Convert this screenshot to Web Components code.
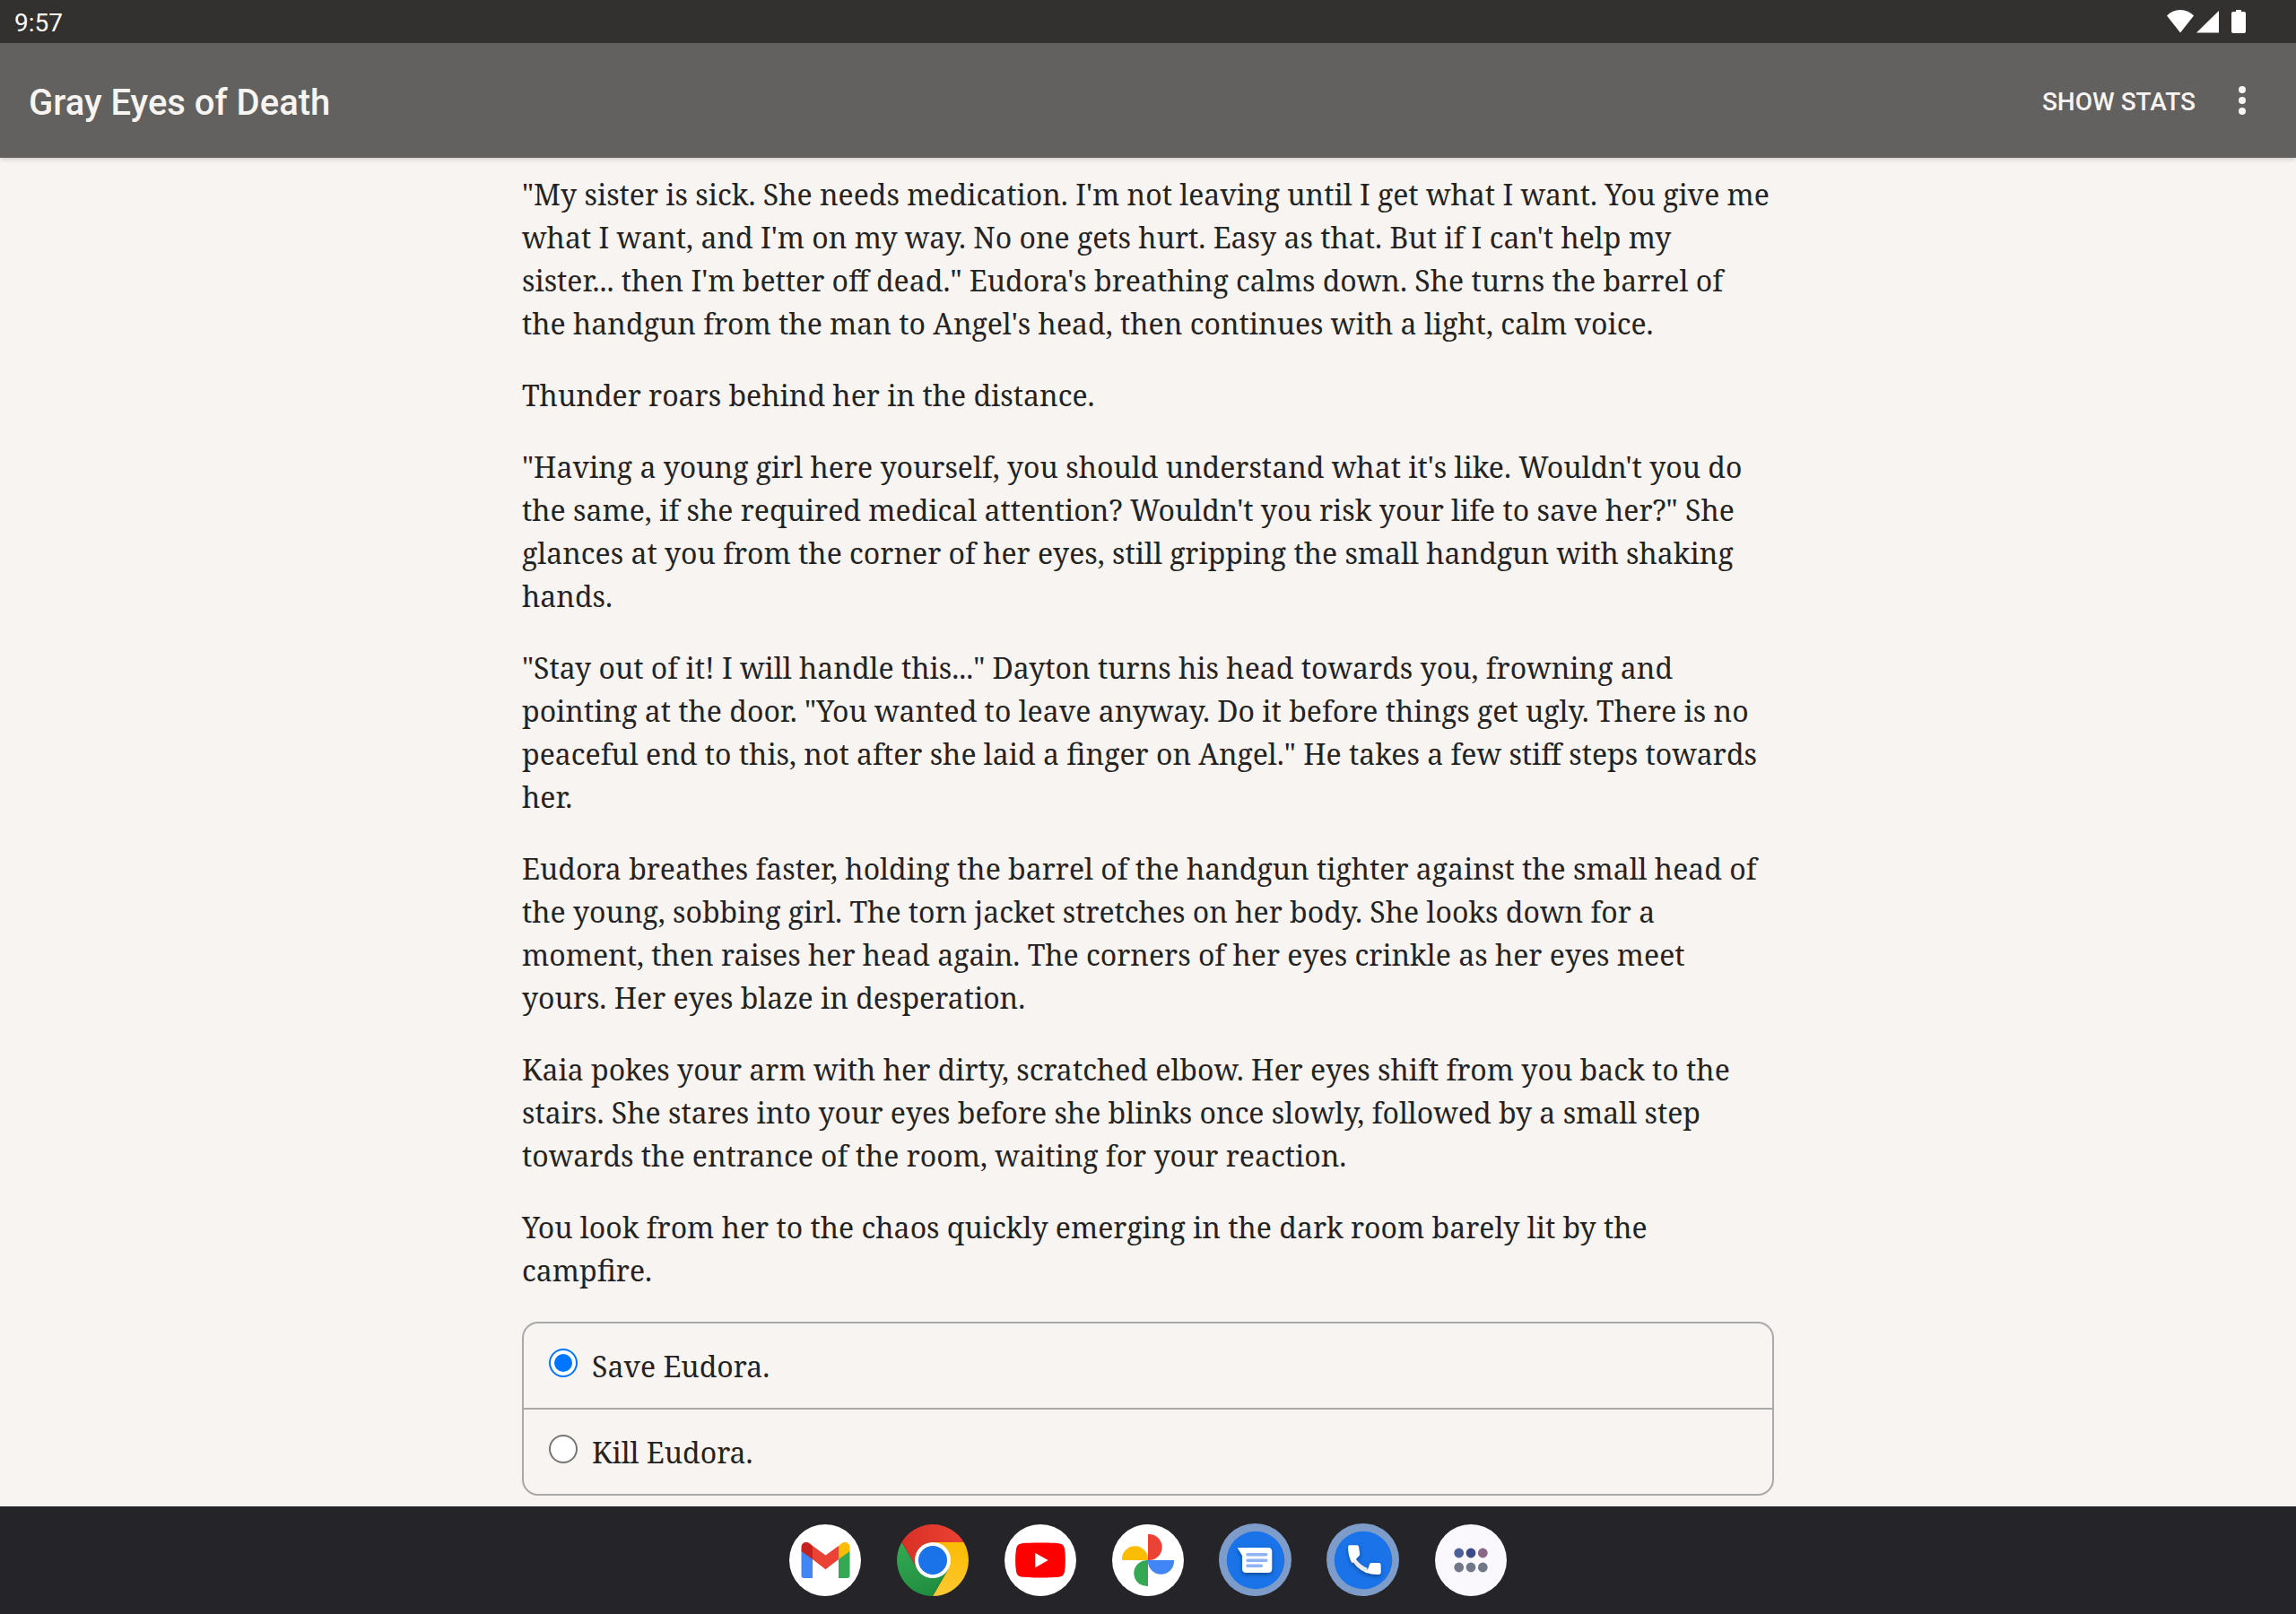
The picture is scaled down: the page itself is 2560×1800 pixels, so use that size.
<!DOCTYPE html>
<html lang="en">
<head>
<meta charset="utf-8">
<meta name="viewport" content="width=device-width, initial-scale=1">
<title>Gray Eyes of Death</title>
<style>
    html, body{
        margin:0;
        height:100%;
        background:#f7f4f1;
    }
    body{
        font-family:Roboto, "Noto Sans", sans-serif;
    }
</style>
</head>
<body>
<game-screen>
    <status-bar slot="top" time="9:57"></status-bar>
    <app-bar slot="top">Gray Eyes of Death</app-bar>

    <story-page>
        <p>"My sister is sick. She needs medication. I'm not leaving until I get what I want. You give me
        what I want, and I'm on my way. No one gets hurt. Easy as that. But if I can't help my<br>
        sister... then I'm better off dead." Eudora's breathing calms down. She turns the barrel of<br>
        the handgun from the man to Angel's head, then continues with a light, calm voice.</p>
        <p>Thunder roars behind her in the distance.</p>
        <p>"Having a young girl here yourself, you should understand what it's like. Wouldn't you do
        the same, if she required medical attention? Wouldn't you risk your life to save her?" She
        glances at you from the corner of her eyes, still gripping the small handgun with shaking
        hands.</p>
        <p>"Stay out of it! I will handle this..." Dayton turns his head towards you, frowning and
        pointing at the door. "You wanted to leave anyway. Do it before things get ugly. There is no
        peaceful end to this, not after she laid a finger on Angel." He takes a few stiff steps towards
        her.</p>
        <p>Eudora breathes faster, holding the barrel of the handgun tighter against the small head of
        the young, sobbing girl. The torn jacket stretches on her body. She looks down for a
        moment, then raises her head again. The corners of her eyes crinkle as her eyes meet
        yours. Her eyes blaze in desperation.</p>
        <p>Kaia pokes your arm with her dirty, scratched elbow. Her eyes shift from you back to the
        stairs. She stares into your eyes before she blinks once slowly, followed by a small step
        towards the entrance of the room, waiting for your reaction.</p>
        <p>You look from her to the chaos quickly emerging in the dark room barely lit by the
        campfire.</p>
        <story-choices selected="0">
            <span>Save Eudora.</span>
            <span>Kill Eudora.</span>
        </story-choices>
    </story-page>

    <app-dock slot="bottom"></app-dock>
</game-screen>

<script>
class GameScreen extends HTMLElement {
    constructor() {
        super();
        this.attachShadow({mode: 'open'});
        this.shadowRoot.innerHTML=`
            <style>
                :host{
                    display:grid;
                    grid-template-rows:auto minmax(0, 1fr) auto;
                    height:100vh;
                }
                header{
                    z-index:1;
                    box-shadow:0 1px 6px rgba(0, 0, 0, .2);
                }
                main{
                    overflow-y:auto;
                }
            </style>
            <header><slot name="top"></slot></header>
            <main><slot></slot></main>
            <slot name="bottom"></slot>
        `;
    }
}

class StatusBar extends HTMLElement {
    constructor() {
        super();
        this.attachShadow({mode: 'open'});
        this.shadowRoot.innerHTML=`
            <style>
                :host{
                    display:flex;
                    align-items:center;
                    justify-content:space-between;
                    height:48px;
                    padding:0 56px 0 16px;
                    color:#fff;
                    background:#32312f;
                }
                time{
                    padding-top:4px;
                    font-size:28px;
                    line-height:32px;
                }
                svg{
                    display:block;
                    fill:currentColor;
                }
            </style>
            <time>${this.getAttribute('time')||''}</time>
            <svg width="88" height="26" viewBox="0 0 88 26" role="img" aria-label="Wi-Fi, mobile signal and battery">
                <path d="M15 0C9 0 4 2.200 0 6.500L15 25.500L30 6.500C26 2.200 21 0 15 0z"/>
                <path d="M58 1V25.500H33z"/>
                <path d="M77 0h6v2h3q2 0 2 2v20q0 2-2 2H74q-2 0-2-2V4q0-2 2-2h3z"/>
            </svg>
        `;
    }
}

class AppBar extends HTMLElement {
    constructor() {
        super();
        this.attachShadow({mode: 'open'});
        this.shadowRoot.innerHTML=`
            <style>
                :host{
                    display:flex;
                    align-items:center;
                    height:128px;
                    padding:0 20px 0 32px;
                    color:#f7f4f1;
                    background:#62615f;
                }
                h1{
                    flex:1;
                    margin:0;
                    padding-top:6px;
                    font-size:40px;
                    font-weight:500;
                    line-height:48px;
                }
                button{
                    display:flex;
                    align-items:center;
                    justify-content:center;
                    height:96px;
                    padding:0 12px;
                    border:0;
                    color:inherit;
                    background:none;
                    font:500 28px/32px Roboto, "Noto Sans", sans-serif;
                    text-transform:uppercase;
                }
                .stats{
                    padding-top:4px;
                }
                .more{
                    width:80px;
                }
                svg{
                    fill:currentColor;
                }
            </style>
            <h1><slot></slot></h1>
            <button type="button" class="stats">Show Stats</button>
            <button type="button" class="more" aria-label="More options">
                <svg width="8" height="32" viewBox="0 0 8 32">
                    <circle cx="4" cy="4" r="4"/>
                    <circle cx="4" cy="16" r="4"/>
                    <circle cx="4" cy="28" r="4"/>
                </svg>
            </button>
        `;
    }
}

class StoryPage extends HTMLElement {
    constructor() {
        super();
        this.attachShadow({mode: 'open'});
        this.shadowRoot.innerHTML=`
            <style>
                :host{
                    display:block;
                    padding:17px 32px 8px;
                    color:#242321;
                    font-family:"Noto Serif", "Liberation Serif", serif;
                    font-size:32px;
                    line-height:48px;
                }
                article{
                    max-width:1396px;
                    margin:0 auto;
                }
                ::slotted(p){
                    margin:0 0 32px;
                }
            </style>
            <article><slot></slot></article>
        `;
    }
}

class StoryChoices extends HTMLElement {
    constructor() {
        super();
        this.attachShadow({mode: 'open'});
    }

    connectedCallback(){
        const selected=Number(this.getAttribute('selected'));
        const options=[...this.children];

        // every child goes to the label of its own radio
        options.forEach((option, i)=>{
            option.slot=`option-${i}`;
        });

        this.shadowRoot.innerHTML=`
            <style>
                :host{
                    display:block;
                    padding-top:1px;
                }
                fieldset{
                    margin:0;
                    padding:0;
                    border:2px solid #a9a9a9;
                    border-radius:18px;
                }
                label{
                    display:flex;
                    align-items:flex-start;
                    gap:16px;
                    padding:24px 28px 22px;
                }
                label + label{
                    border-top:2px solid #a9a9a9;
                }
                input{
                    display:grid;
                    place-items:center;
                    flex:none;
                    box-sizing:border-box;
                    width:32px;
                    height:32px;
                    margin:4px 0 0;
                    appearance:none;
                    border:2px solid #767676;
                    border-radius:50%;
                    background:#fff;
                }
                input:checked{
                    border-color:#0075ff;
                }
                input:checked::before{
                    content:"";
                    width:20px;
                    height:20px;
                    border-radius:50%;
                    background:#0075ff;
                }
            </style>
            <fieldset>
                ${options.map((option, i)=>`
                    <label>
                        <input type="radio" name="choice" ${i===selected?'checked':''}>
                        <slot name="option-${i}"></slot>
                    </label>
                `).join('')}
            </fieldset>
        `;
    }
}

const icons={
    Gmail:`
        <circle cx="40" cy="40" r="40" fill="#fff"/>
        <path fill="#4285f4" d="M13.500 29L26 38V60H16.500a3 3 0 0 1-3-3z"/>
        <path fill="#34a853" d="M67.500 29L55 38V60h9.500a3 3 0 0 0 3-3z"/>
        <path fill="#ea4335" d="M26 24L40.500 34.500L55 24V39L40.500 50.300L26 39z"/>
        <path fill="#c5221f" d="M13.500 30V25.500C13.500 20.500 19 18.500 23 21.600L26 24V39z"/>
        <path fill="#fbbc04" d="M67.500 30V25.500C67.500 20.500 62 18.500 58 21.600L55 24V39z"/>
    `,
    Chrome:`
        <defs>
            <linearGradient id="r"><stop offset="0" stop-color="#d93025"/><stop offset="1" stop-color="#ea4335"/></linearGradient>
            <linearGradient id="g" x1=".6" y1="1" x2=".2" y2="0"><stop offset="0" stop-color="#1e8e3e"/><stop offset="1" stop-color="#34a853"/></linearGradient>
            <linearGradient id="y" x1=".3" y1="1" x2=".6" y2="0"><stop offset="0" stop-color="#fcc934"/><stop offset="1" stop-color="#fbbc04"/></linearGradient>
        </defs>
        <path fill="url(#r)" d="M5.400 20A40 40 0 0 1 74.600 20H40V40L22.700 50z"/>
        <path fill="url(#y)" d="M74.600 20A40 40 0 0 1 40 80L57.300 50L40 40V20z"/>
        <path fill="url(#g)" d="M5.400 20A40 40 0 0 0 40 80L57.300 50L40 40L22.700 50z"/>
        <circle cx="40" cy="40" r="20" fill="#fff"/>
        <circle cx="40" cy="40" r="16" fill="#1a73e8"/>
    `,
    YouTube:`
        <circle cx="40" cy="40" r="40" fill="#fff"/>
        <path fill="#f00" d="M40 20.500C52 20.500 58 20.800 61.500 21.500C65 22.200 66.500 24 67 27.500C68.200 35 68.200 45 67 52.500C66.500 56 65 57.800 61.500 58.500C56 59.800 24 59.800 18.500 58.500C15 57.800 13.500 56 13 52.500C11.800 45 11.800 35 13 27.500C13.500 24 15 22.200 18.500 21.500C22 20.800 28 20.500 40 20.500z"/>
        <path fill="#fff" d="M34.300 32L48.700 40L34.300 48.200z"/>
    `,
    Photos:`
        <circle cx="40" cy="40" r="40" fill="#fff"/>
        <path fill="#ea4335" d="M40 11h1.200a14.500 14.500 0 0 1 0 29H40z"/>
        <path fill="#4285f4" d="M40 11h1.200a14.500 14.500 0 0 1 0 29H40z" transform="rotate(90 40 40)"/>
        <path fill="#34a853" d="M40 11h1.200a14.500 14.500 0 0 1 0 29H40z" transform="rotate(180 40 40)"/>
        <path fill="#fbbc04" d="M40 11h1.200a14.500 14.500 0 0 1 0 29H40z" transform="rotate(270 40 40)"/>
    `,
    Messages:`
        <circle cx="39.500" cy="39.500" r="40.500" fill="#7d9cc9"/>
        <circle cx="40" cy="40" r="32.300" fill="#1a73e8"/>
        <path class="raised" fill="#fff" d="M19.700 26H54Q58.300 26 58.300 30.500V49.500Q58.300 54 54 54H29.500Q25 54 25 49.500V35z"/>
        <path fill="none" stroke="#8fb2f5" stroke-width="3.500" stroke-linecap="round" d="M31 33.800H51.700M31 40.200H51.700M31 46.200H46.300"/>
    `,
    Phone:`
        <circle cx="39.500" cy="39.500" r="40.500" fill="#7d9cc9"/>
        <circle cx="40" cy="40" r="32.300" fill="#1a73e8"/>
        <g class="raised">
            <path fill="#e8eaed" d="M25 36L31.800 38.500Q36.500 45.500 44.500 48.800L44 54.600Q31 49 25 36z"/>
            <path fill="#fff" d="M25 23.200H33Q34.800 23.200 35 25L36.200 32.500Q36.400 34 35.500 35L31.800 39L27.500 43.500Q23 35 23 25.500Q23 23.200 25 23.200z"/>
            <path fill="#fff" d="M49 43H57.500Q59.500 43 59.600 45L59.800 53Q59.700 56 57 56Q50 56.300 42.500 53.800L45.500 49L47 44.500Q47.500 43 49 43z"/>
        </g>
    `,
    'All apps':`
        <circle cx="40" cy="40" r="40" fill="#faf8fd"/>
        <g fill="#707888">
            <circle cx="26.700" cy="32" r="5.400" fill="#4c6199"/>
            <circle cx="40" cy="32" r="5.400" fill="#3a4b89"/>
            <circle cx="53.300" cy="32" r="5.400" fill="#8a6789"/>
            <circle cx="26.700" cy="48" r="5.400"/>
            <circle cx="40" cy="48" r="5.400"/>
            <circle cx="53.300" cy="48" r="5.400"/>
        </g>
    `
};

class AppDock extends HTMLElement {
    constructor() {
        super();
        this.attachShadow({mode: 'open'});
        this.shadowRoot.innerHTML=`
            <style>
                :host{
                    display:block;
                    background:#252429;
                }
                nav{
                    display:flex;
                    align-items:center;
                    justify-content:center;
                    gap:40px;
                    height:120px;
                }
                button{
                    width:80px;
                    height:80px;
                    padding:0;
                    border:0;
                    border-radius:50%;
                    background:none;
                }
                svg{
                    display:block;
                    overflow:visible;
                }
                .raised{
                    filter:drop-shadow(0 2px 2px rgba(0, 0, 0, .35));
                }
            </style>
            <nav aria-label="Apps">
                ${Object.entries(icons).map(([name, shapes])=>`
                    <button type="button" aria-label="${name}">
                        <svg width="80" height="80" viewBox="0 0 80 80">${shapes}</svg>
                    </button>
                `).join('')}
            </nav>
        `;
    }
}

customElements.define('game-screen', GameScreen);
customElements.define('status-bar', StatusBar);
customElements.define('app-bar', AppBar);
customElements.define('story-page', StoryPage);
customElements.define('story-choices', StoryChoices);
customElements.define('app-dock', AppDock);
</script>
</body>
</html>
